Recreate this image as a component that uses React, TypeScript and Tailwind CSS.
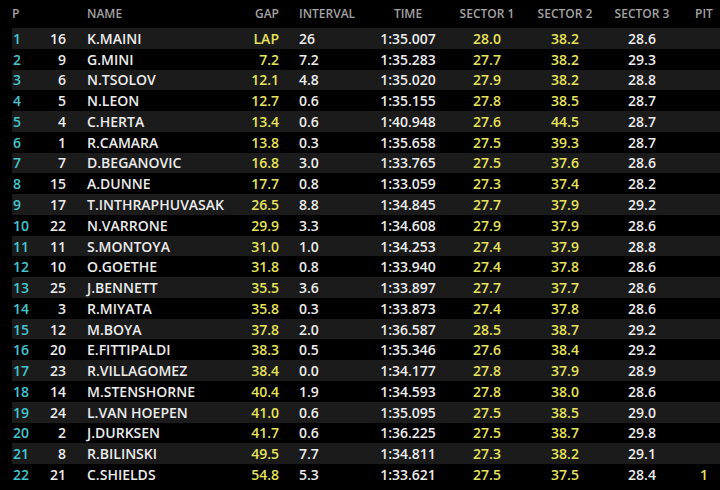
const rows: [number, number, string, string, string, string, string, string, string, string][] = [
  [1, 16, "K.MAINI", "LAP", "26", "1:35.007", "28.0", "38.2", "28.6", ""],
  [2, 9, "G.MINI", "7.2", "7.2", "1:35.283", "27.7", "38.2", "29.3", ""],
  [3, 6, "N.TSOLOV", "12.1", "4.8", "1:35.020", "27.9", "38.2", "28.8", ""],
  [4, 5, "N.LEON", "12.7", "0.6", "1:35.155", "27.8", "38.5", "28.7", ""],
  [5, 4, "C.HERTA", "13.4", "0.6", "1:40.948", "27.6", "44.5", "28.7", ""],
  [6, 1, "R.CAMARA", "13.8", "0.3", "1:35.658", "27.5", "39.3", "28.7", ""],
  [7, 7, "D.BEGANOVIC", "16.8", "3.0", "1:33.765", "27.5", "37.6", "28.6", ""],
  [8, 15, "A.DUNNE", "17.7", "0.8", "1:33.059", "27.3", "37.4", "28.2", ""],
  [9, 17, "T.INTHRAPHUVASAK", "26.5", "8.8", "1:34.845", "27.7", "37.9", "29.2", ""],
  [10, 22, "N.VARRONE", "29.9", "3.3", "1:34.608", "27.9", "37.9", "28.6", ""],
  [11, 11, "S.MONTOYA", "31.0", "1.0", "1:34.253", "27.4", "37.9", "28.8", ""],
  [12, 10, "O.GOETHE", "31.8", "0.8", "1:33.940", "27.4", "37.8", "28.6", ""],
  [13, 25, "J.BENNETT", "35.5", "3.6", "1:33.897", "27.7", "37.7", "28.6", ""],
  [14, 3, "R.MIYATA", "35.8", "0.3", "1:33.873", "27.4", "37.8", "28.6", ""],
  [15, 12, "M.BOYA", "37.8", "2.0", "1:36.587", "28.5", "38.7", "29.2", ""],
  [16, 20, "E.FITTIPALDI", "38.3", "0.5", "1:35.346", "27.6", "38.4", "29.2", ""],
  [17, 23, "R.VILLAGOMEZ", "38.4", "0.0", "1:34.177", "27.8", "37.9", "28.9", ""],
  [18, 14, "M.STENSHORNE", "40.4", "1.9", "1:34.593", "27.8", "38.0", "28.6", ""],
  [19, 24, "L.VAN HOEPEN", "41.0", "0.6", "1:35.095", "27.5", "38.5", "29.0", ""],
  [20, 2, "J.DURKSEN", "41.7", "0.6", "1:36.225", "27.5", "38.7", "29.8", ""],
  [21, 8, "R.BILINSKI", "49.5", "7.7", "1:34.811", "27.3", "38.2", "29.1", ""],
  [22, 21, "C.SHIELDS", "54.8", "5.3", "1:33.621", "27.5", "37.5", "28.4", "1"],
];

export default function App() {
  return (
    <div className="w-[720px] h-[490px] bg-black font-['Open_Sans',sans-serif] font-semibold overflow-hidden">
      {/* header */}
      <div className="flex h-[28px] items-center pl-[12px] text-[12px] text-[#a3a3a3]">
        <div className="w-[28px]">P</div>
        <div className="w-[26px]" />
        <div className="w-[164px] pl-[21px]">NAME</div>
        <div className="w-[49px] text-right">GAP</div>
        <div className="w-[81px] pl-[20px]">INTERVAL</div>
        <div className="w-[96px] text-center">TIME</div>
        <div className="w-[62px] text-center">SECTOR 1</div>
        <div className="w-[94px] text-center">SECTOR 2</div>
        <div className="w-[60px] text-center">SECTOR 3</div>
        <div className="ml-[16px] w-[32px] text-center">PIT</div>
      </div>

      {rows.map((r) => (
        <div
          key={r[0]}
          className={`ml-[12px] flex h-[20.77px] items-center text-[14px] text-[#ececec] ${
            r[0] % 2 === 1 ? "bg-[#1b1b1b]" : ""
          }`}
        >
          <div className="w-[28px] pl-[1px] text-[#45c6cf]">{r[0]}</div>
          <div className="w-[26px] text-right">{r[1]}</div>
          <div className="w-[164px] pl-[21px] whitespace-nowrap">{r[2]}</div>
          <div className="w-[49px] text-right text-[#e6e25c]">{r[3]}</div>
          <div className="w-[81px] pl-[20px]">{r[4]}</div>
          <div className="w-[96px] text-center">{r[5]}</div>
          <div className="w-[62px] text-center text-[#e6e25c]">{r[6]}</div>
          <div className="w-[94px] text-center text-[#e6e25c]">{r[7]}</div>
          <div className="w-[60px] text-center">{r[8]}</div>
          <div className="ml-[16px] w-[32px] text-center text-[#e6e25c]">{r[9]}</div>
        </div>
      ))}
    </div>
  );
}
